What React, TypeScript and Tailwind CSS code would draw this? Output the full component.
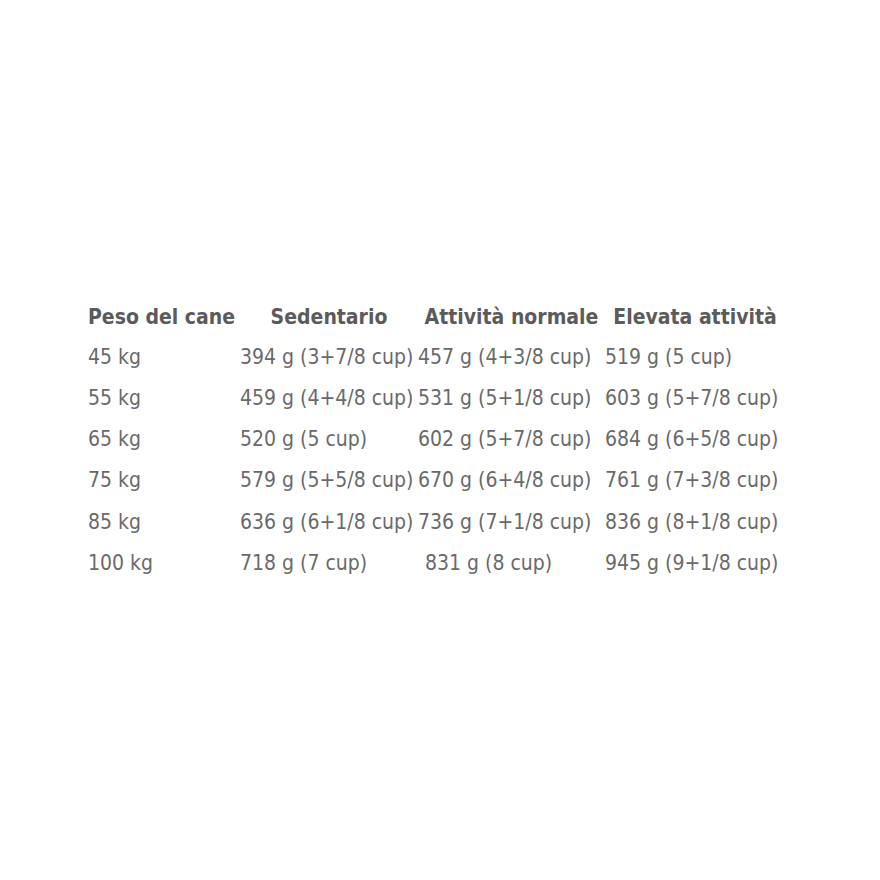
const rows = [
  ["45 kg", "394 g (3+7/8 cup)", "457 g (4+3/8 cup)", "519 g (5 cup)"],
  ["55 kg", "459 g (4+4/8 cup)", "531 g (5+1/8 cup)", "603 g (5+7/8 cup)"],
  ["65 kg", "520 g (5 cup)", "602 g (5+7/8 cup)", "684 g (6+5/8 cup)"],
  ["75 kg", "579 g (5+5/8 cup)", "670 g (6+4/8 cup)", "761 g (7+3/8 cup)"],
  ["85 kg", "636 g (6+1/8 cup)", "736 g (7+1/8 cup)", "836 g (8+1/8 cup)"],
  ["100 kg", "718 g (7 cup)", "831 g (8 cup)", "945 g (9+1/8 cup)"],
];

const headers = ["Peso del cane", "Sedentario", "Attività normale", "Elevata attività"];

export default function App() {
  return (
    <div
      className="w-[880px] h-[880px] bg-white pt-[298px] pl-[88px]"
      style={{ fontFamily: '"DejaVu Sans Condensed", "DejaVu Sans", sans-serif' }}
    >
      <div className="grid grid-cols-[152px_178px_187px_180px]">
        {headers.map((h, i) => (
          <div
            key={h}
            className={`h-[39px] flex items-center whitespace-nowrap text-[21px] font-bold text-[#5b5b5b] ${i === 0 ? "" : "justify-center"}`}
          >
            {h}
          </div>
        ))}
        {rows.map((r) =>
          r.map((c, j) => (
            <div
              key={r[0] + j}
              className={`h-[41.2px] flex items-center whitespace-nowrap text-[21px] text-[#6a6a6a] ${r[0] === "100 kg" && j === 2 ? "pl-[7px]" : ""}`}
            >
              {c}
            </div>
          ))
        )}
      </div>
    </div>
  );
}
